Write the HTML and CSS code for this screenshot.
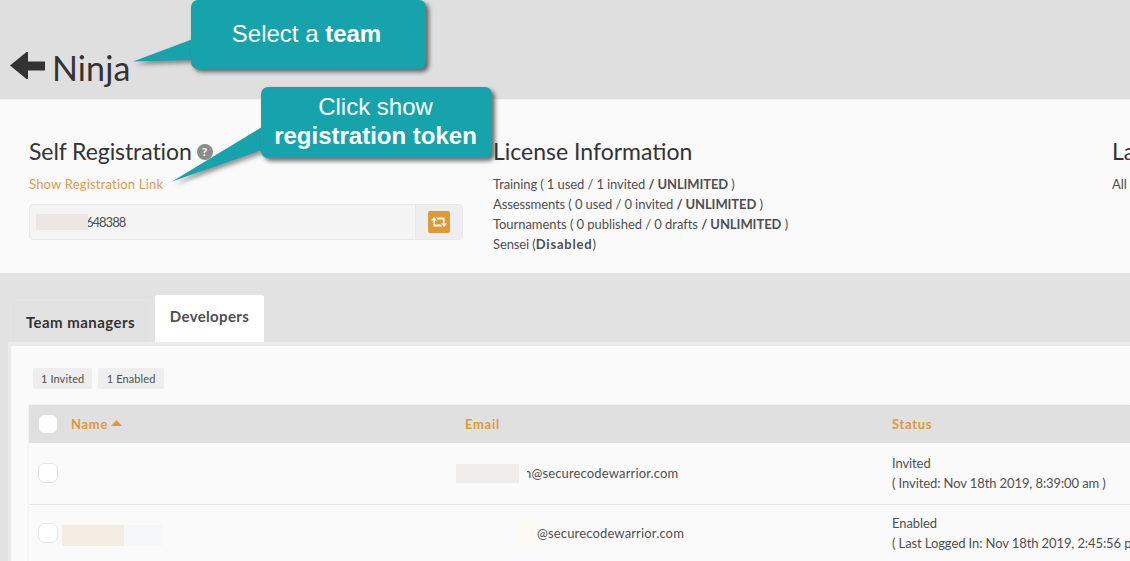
FILE: index.html
```html
<!DOCTYPE html>
<html lang="en">
<head>
<meta charset="utf-8">
<title>Ninja</title>
<link rel="stylesheet" href="styles.css">
</head>
<body>
<header class="top">
  <svg class="back" width="36" height="29" viewBox="0 0 36 29"><path d="M0 14.500 16.500 1h1.500v9.500h17v9h-17v8.500h-1.500z" fill="#333"/></svg>
  <h1>Ninja</h1>
</header>
<section class="panel">
  <div class="col">
    <h2>Self Registration <span class="help">?</span></h2>
    <a class="link">Show Registration Link</a>
    <div class="token">
      <div class="token-value"><span class="patch-token"></span><span class="token-text">648388</span></div>
      <div class="token-btn"><span class="repeat"><svg width="16" height="12" viewBox="0 0 16 12"><path d="M3 1 6 4.500H4V8.500H9.500L11 10.500H2.500V4.500H0zM5 1.500H13.500V7.500H16L13 11 10 7.500H12V3.500H6.500z" fill="#fff"/></svg></span></div>
    </div>
  </div>
  <div class="col">
    <h2 class="title-wide">License Information</h2>
    <p>Training ( 1 used / 1 invited <b>/ UNLIMITED</b> )</p>
    <p>Assessments ( 0 used / 0 invited <b>/ UNLIMITED</b> )</p>
    <p class="line-wide">Tournaments ( 0 published / 0 drafts <b>/ UNLIMITED</b> )</p>
    <p>Sensei (<b class="disabled">Disabled</b>)</p>
  </div>
  <div class="col col-last">
    <h2>Languages</h2>
    <p>All</p>
  </div>
</section>
<nav class="tabs">
  <a class="tab">Team managers</a>
  <a class="tab tab-active">Developers</a>
</nav>
<main class="card">
  <div class="badges"><span class="badge">1 Invited</span><span class="badge badge-wide">1 Enabled</span></div>
  <div class="table">
    <div class="row head">
      <div class="c-name"><span class="check check-head"></span><span>Name</span><svg class="sort" width="11" height="6" viewBox="0 0 11 6"><path d="M5.500 0 11 6H0z" fill="#df9a35"/></svg></div>
      <div>Email</div>
      <div>Status</div>
    </div>
    <div class="row">
      <div class="c-name"><span class="check"></span></div>
      <div class="c-email"><span class="patch-mail"></span><span class="mail"><span class="mail-inner">n@securecodewarrior.com</span></span></div>
      <div class="c-status">Invited<br>( Invited: Nov 18th 2019, 8:39:00 am )</div>
    </div>
    <div class="row row-second">
      <div class="c-name"><span class="check"></span><span class="patch-name"></span><span class="patch-name2"></span></div>
      <div class="c-email"><span class="patch-mail2"></span><span class="mail-plain">@securecodewarrior.com</span></div>
      <div class="c-status">Enabled<br>( Last Logged In: Nov 18th 2019, 2:45:56 pm )</div>
    </div>
  </div>
</main>
<div class="call call-one">
  <svg class="tail tail-one" width="62" height="30" viewBox="0 0 62 30"><path d="M60 0V21L0 22.500z" fill="#17a3ac"/></svg>
  <div class="bubble bubble-one">Select a <b>team</b></div>
</div>
<div class="call call-two">
  <svg class="tail tail-two" width="92" height="70" viewBox="0 0 92 70"><path d="M90 5V28L0 59.500z" fill="#17a3ac"/></svg>
  <div class="bubble bubble-two">Click show<br><b>registration token</b></div>
</div>
</body>
</html>
```
FILE: styles.css
```css
* { box-sizing: border-box; }
html, body { margin: 0; height: 561px; overflow: hidden; }
body {
  background: #e2e2e2;
  color: #4f4f4f;
  font-family: Lato, "Noto Sans", sans-serif;
  font-size: 13px;
  line-height: 20px;
}
.top {
  height: 99px;
  background: #dfdfdf;
  display: flex;
  align-items: flex-start;
  padding: 51px 0 0 10px;
}
.back { flex: none; }
h1 {
  margin: -4px 0 0 6px;
  font-size: 34px;
  line-height: 42px;
  font-weight: 400;
  letter-spacing: .1px;
  color: #333;
}
.panel {
  height: 174px;
  background: #fafafa;
  display: grid;
  grid-template-columns: 434px 589px 1fr;
  gap: 30px;
  padding: 37px 0 0 29px;
  border-top: 1px solid #f2f2f2;
}
h2 {
  margin: 0 0 9px;
  font-size: 23px;
  line-height: 28px;
  font-weight: 400;
  letter-spacing: -.08px;
  color: #333;
  white-space: nowrap;
}
.title-wide { letter-spacing: 0; }
p { margin: 0; white-space: nowrap; letter-spacing: -.1px; }
.line-wide { letter-spacing: -.05px; }
b { font-weight: 700; }
.disabled { letter-spacing: .8px; }
.col-last { overflow: hidden; }
.help {
  display: inline-block;
  width: 16px;
  height: 16px;
  margin-left: -1px;
  border-radius: 50%;
  background: #8c8c8c;
  color: #fafafa;
  font-size: 12px;
  line-height: 16px;
  font-weight: 700;
  letter-spacing: 0;
  text-align: center;
  vertical-align: 4px;
}
.link { color: #df9a50; display: block; letter-spacing: .2px; }
.token {
  margin-top: 10px;
  height: 36px;
  display: flex;
  border: 1px solid #e8e8e8;
  border-radius: 4px;
  background: #f4f4f4;
}
.token-value {
  flex: 1;
  display: flex;
  align-items: center;
  padding-left: 6px;
}
.patch-token { position: relative; z-index: 1; width: 52px; height: 16px; background: #ebe5e4; flex: none; }
.token-text { margin-left: -2px; letter-spacing: -1px; }
.token-btn {
  width: 47px;
  flex: none;
  display: flex;
  align-items: center;
  justify-content: center;
  background: #eeeeee;
  border-left: 1px solid #e8e8e8;
  border-radius: 0 4px 4px 0;
}
.repeat {
  width: 22px;
  height: 22px;
  border-radius: 2px;
  background: #df9a35;
  display: flex;
  align-items: center;
  justify-content: center;
}
.tabs {
  height: 69px;
  display: flex;
  align-items: flex-end;
  padding-left: 10px;
  gap: 4px;
}
.tab {
  width: 141px;
  height: 42px;
  font-size: 15px;
  font-weight: 700;
  letter-spacing: .45px;
  color: #333;
  padding-top: 11px;
  text-align: center;
  border: 1px solid #e5e5e5;
  border-bottom: 0;
  border-radius: 2px 2px 0 0;
}
.tab-active {
  width: 109px;
  height: 47px;
  padding-top: 11px;
  background: #fff;
  border: 0;
  color: #4f4f4f;
  letter-spacing: .35px;
}
.card {
  margin-left: 8px;
  height: 219px;
  overflow: hidden;
  background: #fafafa;
  border: 3px solid #ebebeb;
  border-right: 0;
  border-bottom: 0;
  border-top-width: 4px;
  padding: 22px 0 0 18px;
}
.badges { display: flex; gap: 6px; height: 21px; margin-left: 4px; }
.badge {
  background: #eeeeee;
  border-radius: 2px;
  font-size: 11px;
  letter-spacing: .1px;
  line-height: 21px;
  padding: 0 8px;
}
.badge-wide { padding: 0 8.5px; }
.table {
  margin-top: 16px;
  box-shadow: 0 0 3px rgba(0, 0, 0, .08);
}
.row {
  display: grid;
  grid-template-columns: 436px 427px 1fr;
  height: 62px;
  padding-bottom: 1px;
  border-bottom: 1px solid #e4e4e4;
  align-items: center;
  letter-spacing: -.1px;
}
.head {
  height: 38px;
  padding-bottom: 0;
  background: #e0e0e0;
  border: 0;
  color: #df9a35;
  font-weight: 700;
  letter-spacing: .7px;
}
.c-name {
  display: flex;
  align-items: center;
  padding-left: 9px;
}
.head .c-name > span:nth-child(2) { margin-left: 14px; }
.sort { margin: 0 0 2px 3px; }
.check {
  width: 20px;
  height: 20px;
  flex: none;
  background: #fff;
  border: 1px solid #e4e4e4;
  border-radius: 7px;
}
.check-head { border-color: #fff; width: 18px; height: 18px; margin-left: 1px; border-radius: 6px; }
.c-email { display: flex; align-items: center; letter-spacing: .15px; }
.patch-mail { width: 63px; height: 19px; margin-left: -9px; background: #eeedeb; flex: none; }
.mail { width: 154px; margin-left: 8px; overflow: hidden; white-space: nowrap; }
.mail-inner { margin-left: -3px; }
.patch-mail2 { width: 19px; height: 25px; margin-left: 53px; background: #fbfaf3; flex: none; }
.mail-plain { white-space: nowrap; }
.c-status { line-height: 20px; white-space: nowrap; }
.row-second { border-bottom: 0; height: 56px; padding-bottom: 0; }
.patch-name { width: 62px; height: 21px; margin: 5px 0 0 4px; background: #f3ece2; flex: none; }
.patch-name2 { width: 38px; height: 21px; margin-top: 5px; background: #f6f7f9; flex: none; }
.call { position: absolute; font-family: "Liberation Sans", Arial, sans-serif; color: #fff; }
.call-one { left: 133px; top: 0; }
.call-two { left: 172px; top: 87px; }
.bubble {
  position: relative;
  background: #17a3ac;
  border-radius: 7px;
  text-align: center;
  box-shadow: 3px 3px 4px rgba(50, 50, 50, .7);
}
.bubble-one {
  margin-left: 58px;
  width: 235px;
  height: 69px;
  font-size: 24px;
  line-height: 68px;
  padding-right: 4px;
}
.bubble-two {
  margin-left: 89px;
  width: 231px;
  height: 71px;
  font-size: 24px;
  line-height: 29px;
  padding: 5px 2px 0 0;
}
.tail { position: absolute; left: 0; filter: drop-shadow(3px 3px 2px rgba(50, 50, 50, .5)); }
.tail-one { top: 39px; }
.tail-two { top: 35px; }
```
